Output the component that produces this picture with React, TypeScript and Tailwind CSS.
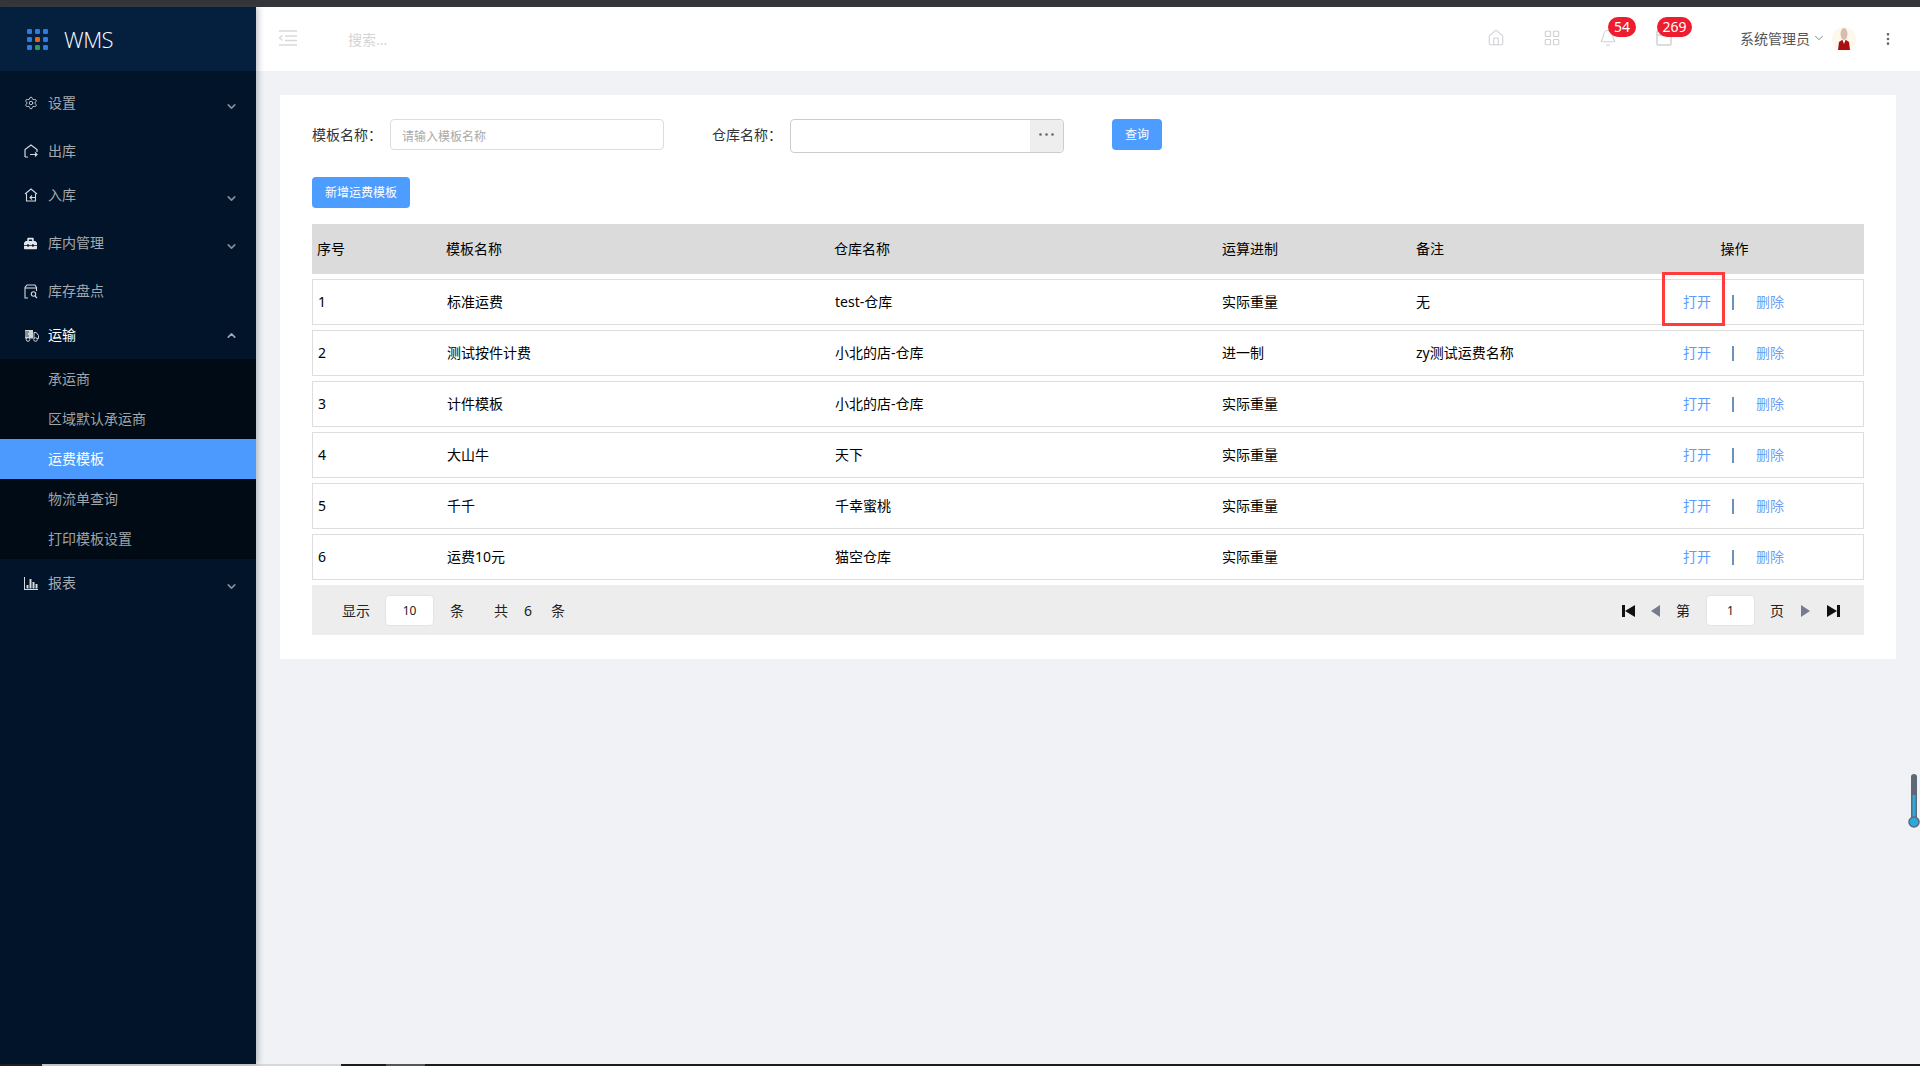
import React from "react";
import { ChevronDown, ChevronUp, Settings, Home, LayoutGrid, Bell, MoreVertical } from "lucide-react";
import { FaToolbox } from "react-icons/fa";

const FONT = "font-['Noto_Sans','Noto_Sans_CJK_SC',sans-serif]";

const OutIcon = () => (
  <svg width="14" height="14" viewBox="0 0 14 14" fill="none" stroke="#d5d8dc" strokeWidth="1.2">
    <path d="M1 13V5.5L7 1l6 4.5V8" />
    <path d="M1 13h3M6 10.5h7M11 8.5l2 2-2 2" />
  </svg>
);
const InIcon = () => (
  <svg width="14" height="14" viewBox="0 0 14 14" fill="none" stroke="#d5d8dc" strokeWidth="1.1">
    <path d="M1 6l6-5 6 5" />
    <path d="M2.5 5.5V13h9V5.5" />
    <path d="M11 9.5H6M8 7.5l-2 2 2 2" />
  </svg>
);
const CheckIcon = () => (
  <svg width="14" height="15" viewBox="0 0 14 15" fill="none" stroke="#d5d8dc" strokeWidth="1.1">
    <path d="M4 14H1V3.5L3 1h8l1.5 2.5V7" />
    <path d="M1 4h11.5" />
    <circle cx="9.5" cy="10" r="2.2" />
    <path d="M11 12l2 2" />
  </svg>
);
const TruckIcon = () => (
  <svg width="15" height="13" viewBox="0 0 15 13">
    <path d="M1 1h8v8.5H1z" fill="#cfd3d8" />
    <path d="M10 3.5h2.2L14.5 6.5v3H10z" fill="none" stroke="#cfd3d8" strokeWidth="1" />
    <path d="M0 3h5M0 5h4M0 7h5" stroke="#021429" strokeWidth=".7" />
    <circle cx="4" cy="10.5" r="1.8" fill="#021429" stroke="#cfd3d8" />
    <circle cx="11.5" cy="10.5" r="1.8" fill="#021429" stroke="#cfd3d8" />
  </svg>
);
const BarsIcon = () => (
  <svg width="14" height="13" viewBox="0 0 14 13" fill="#d5d8dc">
    <path d="M0 0h1v12h13v1H0z" />
    <rect x="2.5" y="8" width="2" height="3.5" />
    <rect x="5.5" y="2" width="2" height="9.5" />
    <rect x="8.5" y="5" width="2" height="6.5" />
    <rect x="11.5" y="7" width="2" height="4.5" />
  </svg>
);

const Logo = () => (
  <div className="grid grid-cols-3 gap-[3px]">
    {["#2a7de1", "#2a7de1", "#2a7de1", "#2a7de1", "#e8641b", "#2a7de1", "#2a7de1", "#2e9e4f", "#2a7de1"].map((c, i) => (
      <svg key={i} width="5" height="5" viewBox="0 0 5 5" className="block"><rect width="5" height="5" rx="1.3" fill={c} /></svg>
    ))}
  </div>
);

type Item = { label: string; icon: React.ReactNode; h: string; arrow?: "down" | "up"; on?: boolean };

const MenuRow = ({ label, icon, h, arrow, on }: Item) => (
  <div className={`flex items-center pl-[24px] pr-[18px] text-[14px] ${h} ${on ? "text-white" : "text-[#a5a9af]"}`}>
    <span className="w-[24px] flex items-center">{icon}</span>
    <span className="flex-1 -translate-y-[1px]">{label}</span>
    {arrow === "down" && <ChevronDown size={13} strokeWidth={3} className="text-[#868e99] translate-y-[3px]" />}
    {arrow === "up" && <ChevronUp size={13} strokeWidth={3} className="text-[#a0a6ae]" />}
  </div>
);

const subs = ["承运商", "区域默认承运商", "运费模板", "物流单查询", "打印模板设置"];

const Sidebar = () => (
  <aside className="w-[256px] shrink-0 bg-[#021429] shadow-[2px_0_6px_rgba(60,70,90,0.35)] z-10 flex flex-col">
    <div className="h-[64px] bg-[#05203f] flex items-center pl-[27px]">
      <Logo />
      <span className="ml-[16px] text-[22px] font-light text-white font-['Open_Sans',sans-serif] tracking-[-0.5px]">WMS</span>
    </div>
    <nav className="pt-[8px]">
      <MenuRow label="设置" h="h-[48px]" arrow="down" icon={<Settings size={14} strokeWidth={1.5} className="text-[#d5d8dc]" />} />
      <MenuRow label="出库" h="h-[48px]" icon={<OutIcon />} />
      <MenuRow label="入库" h="h-[40px]" arrow="down" icon={<InIcon />} />
      <MenuRow label="库内管理" h="h-[56px]" arrow="down" icon={<FaToolbox className="text-[#e3e5e8] text-[13px]" />} />
      <MenuRow label="库存盘点" h="h-[40px]" icon={<CheckIcon />} />
      <MenuRow label="运输" h="h-[48px]" arrow="up" on icon={<TruckIcon />} />
      <div className="bg-[#000b16]">
        {subs.map((s, i) => (
          <div key={s} className={`h-[40px] flex items-center pl-[48px] text-[14px] ${i === 2 ? "bg-[#4d9aff] text-white" : "text-[#a0a4a9]"}`}>
            <span className="-translate-y-[1px]">{s}</span>
          </div>
        ))}
      </div>
      <MenuRow label="报表" h="h-[48px]" arrow="down" icon={<BarsIcon />} />
    </nav>
  </aside>
);

const Badge = ({ n, w }: { n: string; w: string }) => (
  <span className={`absolute top-[-12px] h-[20px] rounded-full bg-[#ed1c2e] text-white text-[14px] leading-[20px] text-center ${w}`}>{n}</span>
);

const Avatar = () => (
  <svg width="24" height="24" viewBox="0 0 24 24" className="block">
    <circle cx="12" cy="12" r="12" fill="#fdf8ec" />
    <ellipse cx="12" cy="7" rx="3.5" ry="6" fill="#d9bcb0" />
    <path d="M6 23l1-8 3-2h4l3 2 1 8z" fill="#a90f0f" />
    <path d="M10.5 13l1.5 4 1.5-4z" fill="#fff" />
  </svg>
);

const Header = () => (
  <header className="h-[64px] bg-white flex items-center relative shrink-0">
    <svg width="19" height="16" viewBox="0 0 19 16" className="ml-[22px] -translate-y-[1px]" fill="none" stroke="#d9d9d9" strokeWidth="1.4">
      <path d="M1 1h18M7 6h12M7 10.5h12M1 15h18" />
      <path d="M4.5 5.5L1.5 8l3 2.5" />
    </svg>
    <span className="ml-[51px] text-[14px] text-[#d4d4d4]">搜索...</span>
    <div className="ml-auto flex items-center text-[#cfd1d4]">
      <Home size={18} strokeWidth={1.5} className="-translate-y-[1px]" />
      <LayoutGrid size={18} strokeWidth={1.5} className="ml-[38px] -translate-y-[1px]" />
      <div className="relative ml-[38px] -translate-y-[1px]">
        <Bell size={18} strokeWidth={1.5} />
        <Badge n="54" w="left-[9px] w-[28px]" />
      </div>
      <div className="relative ml-[38px] -translate-y-[1px]">
        <svg width="18" height="18" viewBox="0 0 18 18" fill="none" stroke="#cfd1d4" strokeWidth="1.5" className="block">
          <rect x="2" y="2" width="14" height="14" rx="1" />
          <path d="M2 6h14" />
        </svg>
        <Badge n="269" w="left-[2px] w-[35px]" />
      </div>
      <span className="ml-[67px] text-[14px] text-[#555] -translate-y-[1px]">系统管理员</span>
      <ChevronDown size={14} strokeWidth={1.5} className="ml-[2px] mr-[2px] text-[#777] -translate-y-[1px]" />
      <span className="ml-[4px]"><Avatar /></span>
      <MoreVertical size={16} strokeWidth={2} className="ml-[24px] mr-[24px] text-[#666]" />
    </div>
  </header>
);

const rows = [
  ["1", "标准运费", "test-仓库", "实际重量", "无"],
  ["2", "测试按件计费", "小北的店-仓库", "进一制", "zy测试运费名称"],
  ["3", "计件模板", "小北的店-仓库", "实际重量", ""],
  ["4", "大山牛", "天下", "实际重量", ""],
  ["5", "千千", "千幸蜜桃", "实际重量", ""],
  ["6", "运费10元", "猫空仓库", "实际重量", ""],
];

const Filter = () => (
  <div className="flex items-start text-[14px] text-[#333]">
    <span className="w-[78px] h-[31px] leading-[31px]">模板名称：</span>
    <div className="w-[274px] h-[31px] border border-[#dddddd] rounded-[4px] px-[11px] pt-[2px] leading-[29px] text-[12px] text-[#aaaaaa]">请输入模板名称</div>
    <span className="ml-[48px] w-[78px] h-[31px] leading-[31px]">仓库名称：</span>
    <div className="w-[274px] h-[34px] border border-[#cccccc] rounded-[4px] flex justify-end overflow-hidden">
      <span className="w-[33px] bg-[#eeeeee] flex items-center justify-center text-[#666]">
        <svg width="15" height="3" viewBox="0 0 15 3" className="-translate-y-[2px]" fill="#666"><circle cx="1.5" cy="1.5" r="1.3" /><circle cx="7.5" cy="1.5" r="1.3" /><circle cx="13.5" cy="1.5" r="1.3" /></svg>
      </span>
    </div>
    <button className="ml-[48px] w-[50px] h-[31px] rounded-[4px] bg-[#4d9cff] text-white text-[12px]">查询</button>
  </div>
);

const headCols = "grid grid-cols-[129px_388px_388px_194px_194px_259px]";
const rowCols = "grid grid-cols-[129px_388px_387px_194px_195px_1fr]";

const Table = () => (
  <div className="mt-[16px] text-[14px] text-black">
    <div className={`${headCols} h-[50px] bg-[#dbdbdb] items-center`}>
      {["序号", "模板名称", "仓库名称", "运算进制", "备注"].map((h) => (
        <span key={h} className="pl-[5px] -translate-y-[1px]">{h}</span>
      ))}
      <span className="text-center -translate-y-[1px]">操作</span>
    </div>
    <div className="mt-[5px] flex flex-col gap-[5px]">
      {rows.map((r, idx) => (
        <div key={r[0]} className={`${rowCols} relative h-[46px] border border-[#dddddd] bg-white items-center`}>
          {r.map((c, i) => (
            <span key={i} className="pl-[5px] whitespace-nowrap -translate-y-[1px]">{c}</span>
          ))}
          <span className="flex items-center pl-[77px] text-[#5b9dff] -translate-y-[1px]">
            <span>打开</span>
            <span className="ml-[21px] w-[2px] h-[15px] bg-[#6b93b8] translate-y-[1px]" />
            <span className="ml-[22px] text-[#6f9ff5]">删除</span>
          </span>
          {idx === 0 && <span className="absolute left-[1349px] top-[-8px] w-[63px] h-[54px] border-[3px] border-[#ff3b3b]" />}
        </div>
      ))}
    </div>
  </div>
);

const PageInput = ({ v }: { v: string }) => (
  <span className="w-[49px] h-[31px] bg-white border border-[#e3e3e3] rounded-[4px] flex items-center justify-center pt-[1px] text-[12px]">{v}</span>
);

const Tri = ({ dir, color }: { dir: "l" | "r"; color: string }) => (
  <svg width="9" height="12" viewBox="0 0 9 12" className="block translate-y-[1px]"><path d={dir === "l" ? "M9 0v12L0 6z" : "M0 0v12l9-6z"} fill={color} /></svg>
);
const Edge = ({ dir }: { dir: "l" | "r" }) => (
  <svg width="13" height="12" viewBox="0 0 13 12" className="block translate-y-[1px]"><path d={dir === "l" ? "M0 0h3v12H0zM13 0v12L3 6z" : "M13 0h-3v12h3zM0 0v12l10-6z"} fill="#111" /></svg>
);

const Pager = () => (
  <div className="mt-[5px] h-[50px] bg-[#ededed] flex items-center text-[14px] text-[#222]">
    <span className="ml-[30px]">显示</span>
    <span className="ml-[15px]"><PageInput v="10" /></span>
    <span className="ml-[16px]">条</span>
    <span className="ml-[30px]">共</span>
    <span className="ml-[16px]">6</span>
    <span className="ml-[19px]">条</span>
    <div className="ml-auto flex items-center mr-[24px]">
      <Edge dir="l" />
      <span className="ml-[16px]"><Tri dir="l" color="#777a90" /></span>
      <span className="ml-[16px]">第</span>
      <span className="ml-[16px]"><PageInput v="1" /></span>
      <span className="ml-[15px]">页</span>
      <span className="ml-[17px]"><Tri dir="r" color="#777a90" /></span>
      <span className="ml-[17px]"><Edge dir="r" /></span>
    </div>
  </div>
);

const Thermometer = () => (
  <svg width="14" height="56" viewBox="0 0 14 56" className="absolute right-0 top-[766px] translate-x-[1px]">
    <rect x="4" y="1" width="6" height="46" rx="3" fill="#5d6a75" />
    <rect x="5.5" y="22" width="3" height="28" fill="#2aa8df" />
    <circle cx="7" cy="49" r="5" fill="#2aa8df" stroke="#5d6a75" strokeWidth="1.5" />
  </svg>
);

export default function App() {
  return (
    <div className={`${FONT} w-[1920px] h-[1066px] flex flex-col overflow-hidden bg-[#f0f2f5]`}>
      <div className="h-[7px] bg-[#35363a] shrink-0" />
      <div className="flex-1 flex min-h-0">
        <Sidebar />
        <div className="flex-1 min-w-0 flex flex-col relative">
          <Header />
          <main className="px-[24px] pt-[24px]">
            <div className="h-[564px] bg-white px-[32px] pt-[24px]">
              <Filter />
              <button className="mt-[24px] block w-[98px] h-[31px] rounded-[4px] bg-[#4d9cff] text-white text-[12px]">新增运费模板</button>
              <Table />
              <Pager />
            </div>
          </main>
          <Thermometer />
        </div>
      </div>
      <div className="h-[2px] shrink-0 bg-[#1c1c1c] flex">
        <div className="ml-[42px] w-[299px] bg-[#d8d8d8]" />
        <div className="ml-[45px] w-[39px] bg-[#555]" />
      </div>
    </div>
  );
}
